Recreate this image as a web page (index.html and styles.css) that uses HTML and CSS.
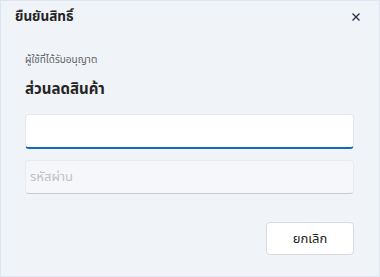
FILE: index.html
```html
<!DOCTYPE html>
<html lang="th">
<head>
<meta charset="utf-8">
<link rel="stylesheet" href="styles.css">
</head>
<body>
<div class="dialog">
  <div class="header">
    <div class="title">ยืนยันสิทธิ์</div>
    <button class="close" aria-label="close">
      <svg width="8" height="8" viewBox="0 0 8 8"><path d="M0.5 0.5L7.5 7.5M7.5 0.5L0.5 7.5" stroke="#2b2f45" stroke-width="1.3" fill="none"/></svg>
    </button>
  </div>
  <div class="body">
    <div class="sub">ผู้ใช้ที่ได้รับอนุญาต</div>
    <div class="heading">ส่วนลดสินค้า</div>
    <div class="field active"></div>
    <div class="field muted"><span class="ph">รหัสผ่าน</span></div>
  </div>
  <div class="footer">
    <button class="btn">ยกเลิก</button>
  </div>
</div>
</body>
</html>
```

FILE: styles.css
```css
html, body {
  margin: 0;
  padding: 0;
}
body {
  width: 380px;
  height: 277px;
  font-family: "Segoe UI", "Noto Sans Thai", "Noto Sans", sans-serif;
  color: #242424;
}
.dialog {
  box-sizing: border-box;
  width: 380px;
  height: 277px;
  background: #f0f4f9;
  border: 1px solid #dce5f0;
  display: flex;
  flex-direction: column;
}
.header {
  display: flex;
  align-items: center;
  justify-content: space-between;
  height: 32px;
  padding: 0 19px 0 14px;
}
.title {
  font-size: 13.5px;
  font-weight: 700;
}
.close {
  border: 0;
  background: none;
  padding: 0;
  width: 8px;
  height: 8px;
  display: flex;
}
.body {
  padding: 18px 25px 0 24px;
  display: flex;
  flex-direction: column;
}
.sub {
  font-size: 10px;
  color: #616161;
  line-height: 18px;
}
.heading {
  font-size: 15px;
  font-weight: 700;
  line-height: 22px;
  margin-top: 10px;
}
.field {
  height: 35px;
  box-sizing: border-box;
  border-radius: 4px;
  display: flex;
  align-items: center;
  padding: 0 4px;
}
.field.active {
  margin-top: 13px;
  background: #fff;
  border: 1px solid #e3e6ea;
  border-bottom: 2px solid #0f6cbd;
}
.field.muted {
  margin-top: 11px;
  height: 34px;
  background: #f5f7fb;
  border: 1px solid #e8ebef;
  border-bottom-color: #c8cbd0;
}
.ph {
  font-size: 13px;
  color: #c2c2c2;
}
.footer {
  margin-top: auto;
  padding: 0 25px 21px 0;
  display: flex;
  justify-content: flex-end;
}
.btn {
  width: 88px;
  height: 33px;
  background: #fff;
  border: 1px solid #d8dbe0;
  border-radius: 4px;
  font-family: inherit;
  font-size: 13px;
  color: #242424;
}
```
